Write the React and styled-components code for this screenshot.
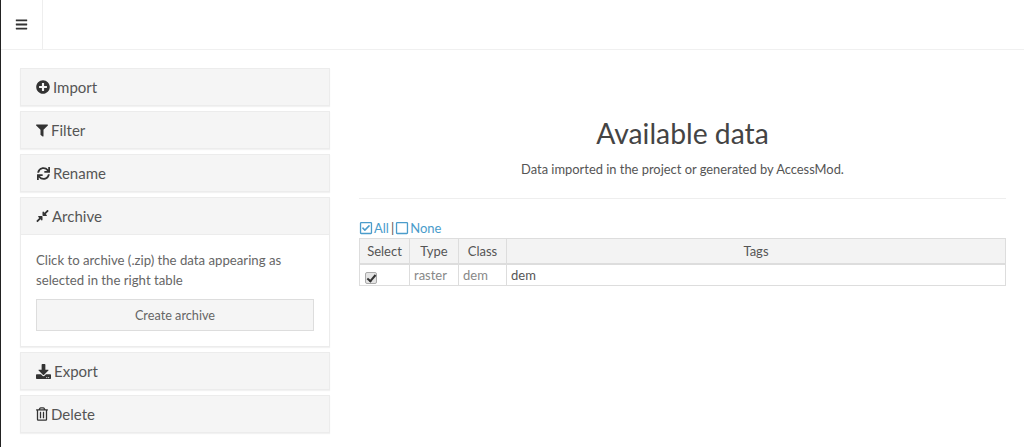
import React from "react";
import styled, { createGlobalStyle } from "styled-components";
import { FaPlusCircle, FaFilter, FaSync, FaCompressAlt, FaDownload, FaRegTrashAlt, FaBars, FaRegCheckSquare, FaRegSquare } from "react-icons/fa";

const Global = createGlobalStyle`
  html, body { margin: 0; padding: 0; background: #fff; }
  body { font-family: "Lato", "Noto Sans", sans-serif; color: #555; }
  * { box-sizing: border-box; }
`;

const Page = styled.div`
  width: 1024px;
  height: 447px;
  overflow: hidden;
  display: flex;
  flex-direction: column;
  border-left: 1px solid #222;
`;
const Navbar = styled.header`
  height: 50px;
  flex: none;
  display: flex;
  border-bottom: 1px solid #f0f0f0;
`;
const Toggle = styled.div`
  width: 42px;
  display: flex;
  align-items: center;
  justify-content: center;
  border-right: 1px solid #eee;
  color: #333;
  font-size: 13px;
`;
const Body = styled.div`
  display: flex;
  flex: 1;
`;
const Sidebar = styled.aside`
  width: 310px;
  margin: 18px 0 0 19px;
  display: flex;
  flex-direction: column;
  gap: 5px;
  flex: none;
`;
const Panel = styled.section`
  border: 1px solid #ececec;
  box-shadow: 0 1px 1px rgba(0, 0, 0, 0.05);
  background: #fff;
`;
const PanelHeading = styled.div`
  height: 36px;
  padding: 0 15px;
  display: flex;
  align-items: center;
  gap: 3px;
  background: #f5f5f5;
  color: #555;
  font-size: 15px;
`;
const IconSlot = styled.span`
  width: ${(p) => p.$w}px;
  height: 15px;
  display: flex;
  align-items: center;
  justify-content: center;
  flex: none;
  color: #333;
  font-size: ${(p) => p.$size || 14}px;
`;
const PanelBody = styled.div`
  border-top: 1px solid #ececec;
  padding: 15px;
  height: 112px;
  font-size: 13.2px;
  line-height: 20px;
  color: #666;
`;
const Wide = styled.div`
  margin-top: 9px;
  height: 32px;
  border: 1px solid #ddd;
  background: #f5f5f5;
  display: flex;
  align-items: center;
  justify-content: center;
  font-size: 12.7px;
`;
const Main = styled.main`
  margin: 0 0 0 29px;
  width: 647px;
  flex: none;
`;
const Hero = styled.div`
  padding-top: 63px;
  height: 149px;
  border-bottom: 1px solid #eee;
  text-align: center;
`;
const Title = styled.h1`
  margin: 0;
  font-size: 28.3px;
  line-height: 40px;
  font-weight: 400;
  color: #444;
`;
const Subtitle = styled.p`
  margin: 7px 0 0;
  font-size: 12.9px;
  line-height: 18px;
`;
const SelectLinks = styled.div`
  margin: 20px 0 1px;
  height: 18px;
  display: flex;
  align-items: center;
  gap: 1px;
  font-size: 13px;
  color: #4a9ccb;
  svg { font-size: 14px; flex: none; }
`;
const Divider = styled.span`
  color: #555;
  margin-left: 1px;
`;
const Table = styled.table`
  width: 100%;
  border-collapse: collapse;
  font-size: 13px;
  border: 1px solid #ccc;
  table-layout: fixed;
`;
const Th = styled.th`
  height: 25px;
  padding: 0;
  font-weight: 400;
  background: #f3f3f3;
  color: #555;
  border: 1px solid #ddd;
  border-bottom-width: 2px;
  width: ${(p) => (p.$w ? p.$w + "px" : "auto")};
`;
const Td = styled.td`
  height: 22px;
  padding: 0 4px;
  border: 1px solid #ddd;
  color: ${(p) => (p.$muted ? "#888" : "#555")};
`;
const Box = styled.input`
  appearance: none;
  position: relative;
  display: block;
  margin: 6px 0 0 1px;
  width: 12px;
  height: 12px;
  border: 1px solid #aaa;
  border-radius: 2px;
  background: #e4e4e4;
  &::after {
    content: "";
    position: absolute;
    left: 3px;
    top: 0;
    width: 3px;
    height: 7px;
    border: solid #333;
    border-width: 0 2px 2px 0;
    transform: rotate(40deg);
  }
`;

const Section = ({ icon, w, size, label, children }) => (
  <Panel>
    <PanelHeading>
      <IconSlot $w={w} $size={size}>{icon}</IconSlot>
      {label}
    </PanelHeading>
    {children}
  </Panel>
);

export default function App() {
  return (
    <Page>
      <Global />
      <Navbar><Toggle><FaBars /></Toggle></Navbar>
      <Body>
        <Sidebar>
          <Section icon={<FaPlusCircle />} w={14} label="Import" />
          <Section icon={<FaFilter />} w={12} size={13} label="Filter" />
          <Section icon={<FaSync />} w={14} size={13} label="Rename" />
          <Section icon={<FaCompressAlt />} w={13} label="Archive">
            <PanelBody>
              Click to archive (.zip) the data appearing as selected in the right table
              <Wide>Create archive</Wide>
            </PanelBody>
          </Section>
          <Section icon={<FaDownload />} w={15} size={15} label="Export" />
          <Section icon={<FaRegTrashAlt />} w={12} size={14} label="Delete" />
        </Sidebar>
        <Main>
          <Hero>
            <Title>Available data</Title>
            <Subtitle>Data imported in the project or generated by AccessMod.</Subtitle>
          </Hero>
          <SelectLinks><FaRegCheckSquare /> All <Divider>|</Divider> <FaRegSquare /> None</SelectLinks>
          <Table>
            <thead>
              <tr>
                <Th $w={50}>Select</Th><Th $w={49}>Type</Th><Th $w={48}>Class</Th><Th>Tags</Th>
              </tr>
            </thead>
            <tbody>
              <tr>
                <Td><Box type="checkbox" defaultChecked /></Td>
                <Td $muted>raster</Td>
                <Td $muted>dem</Td>
                <Td>dem</Td>
              </tr>
            </tbody>
          </Table>
        </Main>
      </Body>
    </Page>
  );
}
